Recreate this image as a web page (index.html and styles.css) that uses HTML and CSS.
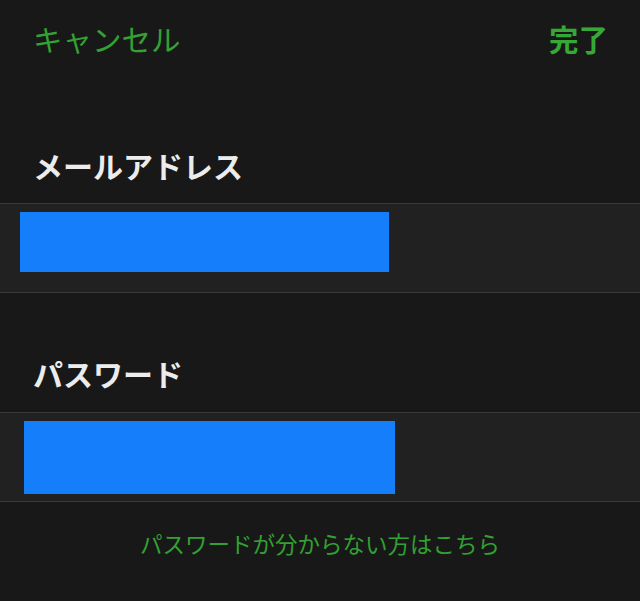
FILE: index.html
```html
<!DOCTYPE html>
<html lang="ja">
<head>
<meta charset="utf-8">
<link rel="stylesheet" href="styles.css">
</head>
<body>
<div class="screen">
  <header class="nav">
    <span class="nav-cancel">キャンセル</span>
    <span class="nav-done">完了</span>
  </header>
  <div class="label label-first">メールアドレス</div>
  <div class="row">
    <div class="field field-email"></div>
  </div>
  <div class="label label-second">パスワード</div>
  <div class="row">
    <div class="field field-password"></div>
  </div>
  <div class="forgot">パスワードが分からない方はこちら</div>
</div>
</body>
</html>
```
FILE: styles.css
```css
html, body {
  margin: 0;
  padding: 0;
  background: #181818;
}
.screen {
  width: 640px;
  height: 601px;
  overflow: hidden;
  font-family: "Noto Sans CJK JP", "Noto Sans", sans-serif;
  display: flex;
  flex-direction: column;
}
.nav {
  height: 80px;
  box-sizing: border-box;
  padding: 0 32px 4px 33px;
  display: flex;
  justify-content: space-between;
  align-items: center;
}
.nav-cancel {
  font-size: 29.5px;
  color: #33a133;
  line-height: 36px;
}
.nav-done {
  font-size: 29.5px;
  font-weight: bold;
  color: #36a836;
  line-height: 36px;
}
.label {
  font-size: 30px;
  font-weight: 600;
  color: #ececec;
  line-height: 36px;
  padding-left: 33px;
}
.label-first {
  padding-top: 67px;
  padding-bottom: 20px;
}
.label-second {
  padding-top: 62px;
  padding-bottom: 21px;
}
.row {
  height: 88px;
  background: #212121;
  border-top: 1px solid #3a3a3a;
  border-bottom: 1px solid #3a3a3a;
}
.field {
  background: #157ffb;
  margin-top: 8px;
}
.field-email {
  margin-left: 20px;
  width: 369px;
  height: 60px;
}
.field-password {
  margin-left: 24px;
  width: 371px;
  height: 73px;
}
.forgot {
  padding-top: 28px;
  text-align: center;
  font-size: 22.5px;
  line-height: 26px;
  color: #32a032;
}
```
